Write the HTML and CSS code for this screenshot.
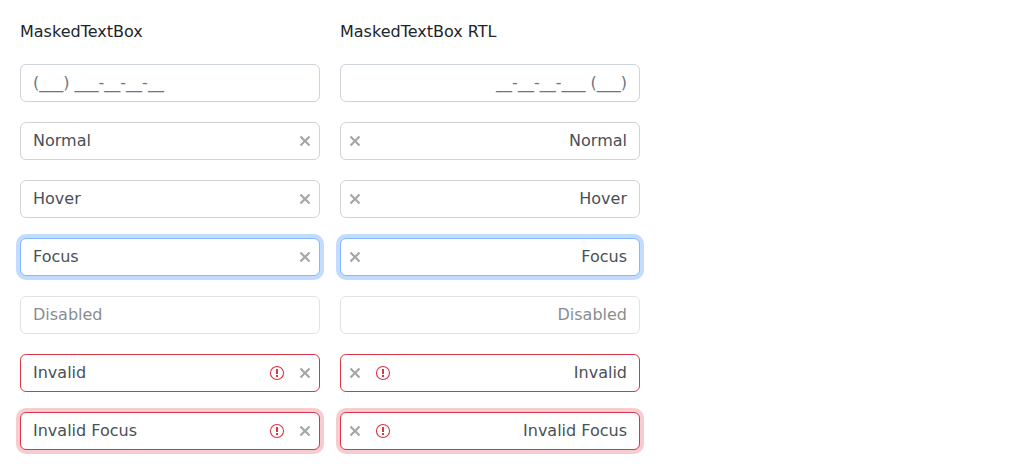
FILE: index.html
```
<!DOCTYPE html>
<html lang="en">
<head>
<meta charset="utf-8">
<title>MaskedTextBox</title>
<link rel="stylesheet" href="styles.css">
</head>
<body>
<svg class="defs" width="0" height="0">
<symbol id="clear" viewBox="0 0 16 16"><path d="M13.300 4.300 9.600 8l3.700 3.700-1.600 1.600L8 9.600l-3.700 3.700-1.600-1.600L6.400 8 2.700 4.300l1.600-1.600L8 6.400l3.700-3.700z"/></symbol>
<symbol id="alert" viewBox="0 0 16 16"><path fill-rule="evenodd" d="M8 .9a7.100 7.100 0 1 0 0 14.200A7.100 7.100 0 0 0 8 .9zm0 1.100a6 6 0 1 1 0 12A6 6 0 0 1 8 2z"/><path d="M7 4h2v5H7zM7 10h2v2H7z"/></symbol>
</svg>
<main class="grid">
<section class="column">
<h1 class="title">MaskedTextBox</h1>
<div class="box"><span class="value placeholder">(___) ___-__-__-__</span></div>
<div class="box"><span class="value">Normal</span><svg class="icon clear"><use href="#clear"/></svg></div>
<div class="box"><span class="value">Hover</span><svg class="icon clear"><use href="#clear"/></svg></div>
<div class="box focus"><span class="value">Focus</span><svg class="icon clear"><use href="#clear"/></svg></div>
<div class="box disabled"><span class="value">Disabled</span></div>
<div class="box invalid"><span class="value">Invalid</span><svg class="icon alert"><use href="#alert"/></svg><svg class="icon clear"><use href="#clear"/></svg></div>
<div class="box invalid focus"><span class="value">Invalid Focus</span><svg class="icon alert"><use href="#alert"/></svg><svg class="icon clear"><use href="#clear"/></svg></div>
</section>
<section class="column">
<h1 class="title">MaskedTextBox RTL</h1>
<div class="box" dir="rtl"><span class="value placeholder">(___) ___-__-__-__</span></div>
<div class="box" dir="rtl"><span class="value">Normal</span><svg class="icon clear"><use href="#clear"/></svg></div>
<div class="box" dir="rtl"><span class="value">Hover</span><svg class="icon clear"><use href="#clear"/></svg></div>
<div class="box focus" dir="rtl"><span class="value">Focus</span><svg class="icon clear"><use href="#clear"/></svg></div>
<div class="box disabled" dir="rtl"><span class="value">Disabled</span></div>
<div class="box invalid" dir="rtl"><span class="value">Invalid</span><svg class="icon alert"><use href="#alert"/></svg><svg class="icon clear"><use href="#clear"/></svg></div>
<div class="box invalid focus" dir="rtl"><span class="value">Invalid Focus</span><svg class="icon alert"><use href="#alert"/></svg><svg class="icon clear"><use href="#clear"/></svg></div>
</section>
</main>
</body>
</html>
```
FILE: styles.css
```
body {
  margin: 0;
  background: #fff;
  color: #212529;
  font: 16px/24px "DejaVu Sans", sans-serif;
}
.defs { display: block; }
.grid {
  display: grid;
  grid-template-columns: 300px 300px;
  gap: 20px;
  padding: 20px;
}
.column {
  display: flex;
  flex-direction: column;
  gap: 20px;
}
.title {
  margin: 0;
  font-size: 16px;
  font-weight: 400;
  line-height: 24px;
}
.box {
  box-sizing: border-box;
  display: flex;
  align-items: center;
  height: 38px;
  border: 1px solid #ced4da;
  border-radius: 6px;
  background: #fff;
  color: #495057;
}
.value {
  flex: 1;
  padding: 0 12px;
}
.placeholder { color: #6c757d; }
.icon {
  width: 16px;
  height: 16px;
  fill: currentColor;
}
.clear {
  margin: 0 6px;
  color: #a4a7ab;
}
.alert {
  margin: 0 6px;
  color: #dc3545;
}
.focus {
  border-color: #86b7fe;
  box-shadow: 0 0 0 4px rgba(13, 110, 253, 0.25);
}
.disabled { opacity: 0.65; }
.invalid { border-color: #dc3545; }
.invalid.focus { box-shadow: 0 0 0 4px rgba(220, 53, 69, 0.25); }
```
